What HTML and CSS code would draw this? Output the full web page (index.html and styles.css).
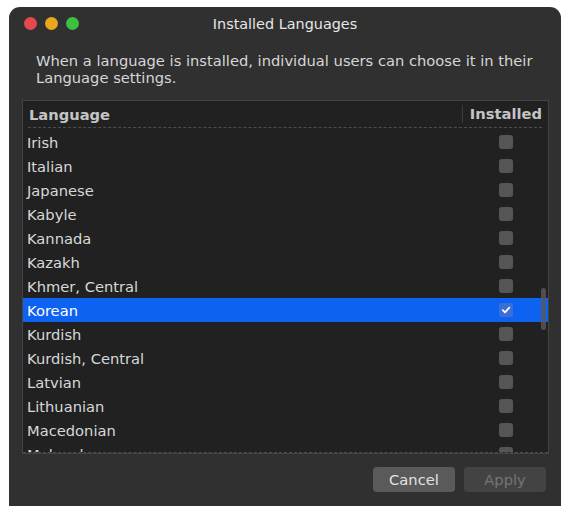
FILE: index.html
```html
<!DOCTYPE html>
<html>
<head>
<meta charset="utf-8">
<link rel="stylesheet" href="styles.css">
</head>
<body>
<div class="window">
  <div class="titlebar">
    <div class="lights">
      <span class="light red"></span>
      <span class="light yellow"></span>
      <span class="light green"></span>
    </div>
    <div class="title">Installed Languages</div>
  </div>
  <p class="desc">When a language is installed, individual users can choose it in their Language settings.</p>
  <div class="list">
    <div class="header">
      <div class="hname">Language</div>
      <div class="hinst">Installed</div>
    </div>
    <div class="rows">
      <div class="row"><span class="name">Irish</span><span class="chkcol"><span class="chk"></span></span></div>
      <div class="row"><span class="name">Italian</span><span class="chkcol"><span class="chk"></span></span></div>
      <div class="row"><span class="name">Japanese</span><span class="chkcol"><span class="chk"></span></span></div>
      <div class="row"><span class="name">Kabyle</span><span class="chkcol"><span class="chk"></span></span></div>
      <div class="row"><span class="name">Kannada</span><span class="chkcol"><span class="chk"></span></span></div>
      <div class="row"><span class="name">Kazakh</span><span class="chkcol"><span class="chk"></span></span></div>
      <div class="row"><span class="name">Khmer, Central</span><span class="chkcol"><span class="chk"></span></span></div>
      <div class="row selected"><span class="name">Korean</span><span class="chkcol"><span class="chk checked"><svg width="10" height="10" viewBox="0 0 10 10"><path d="M1.8 5.2 L4 7.3 L8.3 2.6" fill="none" stroke="#ffffff" stroke-width="1.8" stroke-linecap="round" stroke-linejoin="round"/></svg></span></span></div>
      <div class="row"><span class="name">Kurdish</span><span class="chkcol"><span class="chk"></span></span></div>
      <div class="row"><span class="name">Kurdish, Central</span><span class="chkcol"><span class="chk"></span></span></div>
      <div class="row"><span class="name">Latvian</span><span class="chkcol"><span class="chk"></span></span></div>
      <div class="row"><span class="name">Lithuanian</span><span class="chkcol"><span class="chk"></span></span></div>
      <div class="row"><span class="name">Macedonian</span><span class="chkcol"><span class="chk"></span></span></div>
      <div class="row"><span class="name">Malayalam</span><span class="chkcol"><span class="chk"></span></span></div>
    </div>
    <div class="thumb"></div>
  </div>
  <div class="buttons">
    <button class="btn cancel">Cancel</button>
    <button class="btn apply">Apply</button>
  </div>
</div>
</body>
</html>
```
FILE: styles.css
```css
html, body {
  margin: 0;
  padding: 0;
  background: #ffffff;
}
body {
  font-family: "DejaVu Sans", "Liberation Sans", sans-serif;
  font-size: 14.7px;
}
.window {
  margin: 7px 0 0 9px;
  width: 552px;
  height: 499px;
  background: #303030;
  border-radius: 11px 11px 0 0;
  box-sizing: border-box;
  display: flex;
  flex-direction: column;
}
.titlebar {
  height: 32px;
  display: flex;
  align-items: center;
  position: relative;
  padding-top: 1px;
  box-sizing: border-box;
}
.lights {
  display: flex;
  gap: 8px;
  padding-left: 15px;
}
.light {
  width: 13px;
  height: 13px;
  border-radius: 50%;
  display: block;
}
.red { background: #e5484d; }
.yellow { background: #e8a71c; }
.green { background: #3fbf3f; }
.title {
  position: absolute;
  left: 0;
  right: 0;
  text-align: center;
  color: #e6e6e6;
  font-size: 14.4px;
}
.desc {
  margin: 13px 0 0 27px;
  width: 515px;
  color: #d6d6d6;
  font-size: 14.7px;
  line-height: 17px;
}
.list {
  margin: 14px 0 0 13px;
  width: 527px;
  height: 354px;
  border: 1px solid #444444;
  box-sizing: border-box;
  background: #212121;
  position: relative;
  display: flex;
  flex-direction: column;
  overflow: hidden;
}
.header {
  height: 26px;
  display: flex;
  align-items: center;
  border-bottom: 1px dashed #4d4d4d;
  margin: 0 6px 0 5px;
  flex: none;
}
.hname {
  flex: 1;
  font-weight: bold;
  color: #c4c4c4;
  padding-left: 1px;
}
.hinst {
  width: 79px;
  font-weight: bold;
  color: #c4c4c4;
  text-align: right;
  border-left: 1px solid #3c3c3c;
  height: 18px;
  line-height: 18px;
  white-space: nowrap;
}
.rows {
  flex: 1;
  overflow: hidden;
  border-bottom: 1px dashed #4d4d4d;
  margin-top: 2px;
}
.row {
  height: 24px;
  display: flex;
  align-items: center;
  color: #d8d8d8;
}
.row .name {
  flex: 1;
  padding-left: 4px;
}
.row.selected {
  background: #0e62f2;
  color: #ffffff;
}
.chkcol {
  width: 85px;
  display: flex;
  justify-content: center;
  padding-left: 1px;
  box-sizing: border-box;
}
.chk {
  width: 14px;
  height: 14px;
  border-radius: 3px;
  background: #555555;
  display: flex;
  align-items: center;
  justify-content: center;
}
.chk.checked {
  background: #3a6fd8;
}
.thumb {
  position: absolute;
  right: 2px;
  top: 187px;
  width: 5px;
  height: 42px;
  border-radius: 3px;
  background: #5a5a5a;
  opacity: 0.8;
}
.buttons {
  display: flex;
  justify-content: flex-end;
  gap: 9px;
  padding-right: 15px;
  margin-top: 13px;
}
.btn {
  width: 82px;
  height: 25px;
  border: none;
  border-radius: 4px;
  font-family: "DejaVu Sans", "Liberation Sans", sans-serif;
  font-size: 14.7px;
  padding: 0;
}
.cancel {
  background: #5a5a5a;
  color: #e2e2e2;
}
.apply {
  background: #434343;
  color: #757575;
}
```
